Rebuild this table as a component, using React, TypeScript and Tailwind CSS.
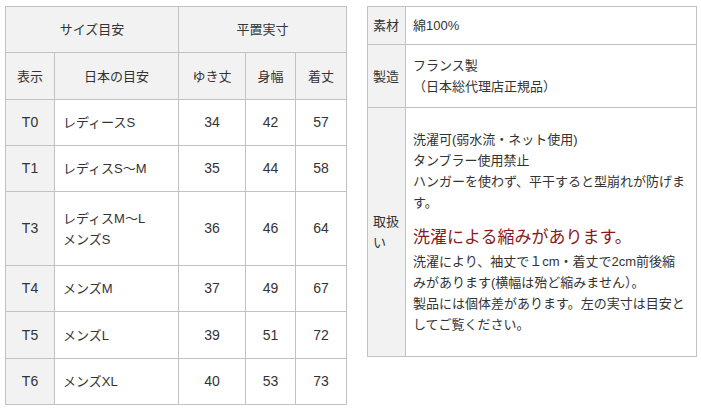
import React from "react";

const sizes = [
  { code: "T0", label: ["レディースS"], a: 34, b: 42, c: 57, h: "h-[46px]" },
  { code: "T1", label: ["レディスS〜M"], a: 35, b: 44, c: 58, h: "h-[46px]" },
  { code: "T3", label: ["レディスM〜L", "メンズS"], a: 36, b: 46, c: 64, h: "h-[74px]" },
  { code: "T4", label: ["メンズM"], a: 37, b: 49, c: 67, h: "h-[46px]" },
  { code: "T5", label: ["メンズL"], a: 39, b: 51, c: 72, h: "h-[47px]" },
  { code: "T6", label: ["メンズXL"], a: 40, b: 53, c: 73, h: "h-[46px]" },
];

const cell = "border border-[#c2c2c2] p-0";
const head = "border border-[#c2c2c2] bg-[#f2f2f2] p-0 font-normal text-center";

export default function App() {
  return (
    <div
      className="flex items-start gap-[20px] bg-white pl-[5px] pt-[6px] text-[13px] leading-[21px] text-[#333]"
      style={{ fontFamily: '"Liberation Sans", "Noto Sans CJK JP", sans-serif' }}
    >
      <table className="w-[341px] table-fixed border-collapse">
        <colgroup>
          <col className="w-[49px]" />
          <col className="w-[124px]" />
          <col className="w-[67px]" />
          <col className="w-[50px]" />
          <col className="w-[51px]" />
        </colgroup>
        <thead>
          <tr>
            <th colSpan={2} className={`${head} h-[46px]`}>
              サイズ目安
            </th>
            <th colSpan={3} className={`${head} h-[46px]`}>
              平置実寸
            </th>
          </tr>
          <tr>
            <th className={`${head} h-[47px]`}>表示</th>
            <th className={`${head} h-[47px]`}>日本の目安</th>
            <th className={`${head} h-[47px]`}>ゆき丈</th>
            <th className={`${head} h-[47px]`}>身幅</th>
            <th className={`${head} h-[47px]`}>着丈</th>
          </tr>
        </thead>
        <tbody>
          {sizes.map((s) => (
            <tr key={s.code}>
              <td className={`${cell} ${s.h} bg-[#f2f2f2] text-center text-[14px]`}>{s.code}</td>
              <td className={`${cell} pl-[8px]`}>
                {s.label.map((l) => (
                  <div key={l}>{l}</div>
                ))}
              </td>
              <td className={`${cell} text-center text-[14px]`}>{s.a}</td>
              <td className={`${cell} text-center text-[14px]`}>{s.b}</td>
              <td className={`${cell} text-center text-[14px]`}>{s.c}</td>
            </tr>
          ))}
        </tbody>
      </table>

      <table className="w-[330px] table-fixed border-collapse">
        <colgroup>
          <col className="w-[38px]" />
          <col />
        </colgroup>
        <tbody>
          <tr>
            <td className={`${cell} h-[38px] bg-[#f2f2f2] px-[5px]`}>素材</td>
            <td className={`${cell} pl-[7px] pr-[9px]`}>綿100%</td>
          </tr>
          <tr>
            <td className={`${cell} h-[63px] bg-[#f2f2f2] px-[5px]`}>製造</td>
            <td className={`${cell} pl-[7px] pr-[9px]`}>
              <div>フランス製</div>
              <div>（日本総代理店正規品）</div>
            </td>
          </tr>
          <tr>
            <td className={`${cell} bg-[#f2f2f2] px-[5px]`}>取扱い</td>
            <td className={`${cell} py-[21px] pl-[7px] pr-[9px]`}>
              <div>洗濯可(弱水流・ネット使用)</div>
              <div>タンブラー使用禁止</div>
              <div>ハンガーを使わず、平干すると型崩れが防げます。</div>
              <div className="mt-[12px] text-[17px] leading-[26px] text-[#8b1a1a]">
                洗濯による縮みがあります。
              </div>
              <div>洗濯により、袖丈で１cm・着丈で2cm前後縮みがあります(横幅は殆ど縮みません）。</div>
              <div>製品には個体差があります。左の実寸は目安としてご覧ください。</div>
            </td>
          </tr>
        </tbody>
      </table>
    </div>
  );
}
